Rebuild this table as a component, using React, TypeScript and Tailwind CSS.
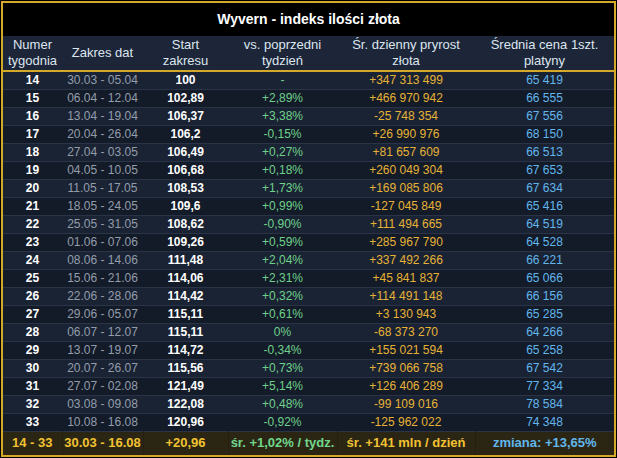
import React from "react"

type Row = [number, string, string, string, string, string]

const rows: Row[] = [
  [14, "30.03 - 05.04", "100", "-", "+347 313 499", "65 419"],
  [15, "06.04 - 12.04", "102,89", "+2,89%", "+466 970 942", "66 555"],
  [16, "13.04 - 19.04", "106,37", "+3,38%", "-25 748 354", "67 556"],
  [17, "20.04 - 26.04", "106,2", "-0,15%", "+26 990 976", "68 150"],
  [18, "27.04 - 03.05", "106,49", "+0,27%", "+81 657 609", "66 513"],
  [19, "04.05 - 10.05", "106,68", "+0,18%", "+260 049 304", "67 653"],
  [20, "11.05 - 17.05", "108,53", "+1,73%", "+169 085 806", "67 634"],
  [21, "18.05 - 24.05", "109,6", "+0,99%", "-127 045 849", "65 416"],
  [22, "25.05 - 31.05", "108,62", "-0,90%", "+111 494 665", "64 519"],
  [23, "01.06 - 07.06", "109,26", "+0,59%", "+285 967 790", "64 528"],
  [24, "08.06 - 14.06", "111,48", "+2,04%", "+337 492 266", "66 221"],
  [25, "15.06 - 21.06", "114,06", "+2,31%", "+45 841 837", "65 066"],
  [26, "22.06 - 28.06", "114,42", "+0,32%", "+114 491 148", "66 156"],
  [27, "29.06 - 05.07", "115,11", "+0,61%", "+3 130 943", "65 285"],
  [28, "06.07 - 12.07", "115,11", "0%", "-68 373 270", "64 266"],
  [29, "13.07 - 19.07", "114,72", "-0,34%", "+155 021 594", "65 258"],
  [30, "20.07 - 26.07", "115,56", "+0,73%", "+739 066 758", "67 542"],
  [31, "27.07 - 02.08", "121,49", "+5,14%", "+126 406 289", "77 334"],
  [32, "03.08 - 09.08", "122,08", "+0,48%", "-99 109 016", "78 584"],
  [33, "10.08 - 16.08", "120,96", "-0,92%", "-125 962 022", "74 348"],
]

export default function App() {
  return (
    <div className="w-[617px] h-[458px] bg-black p-px font-['Liberation_Sans',Arial,sans-serif]">
      <div className="w-[615px] h-[456px] border-2 border-[#d4a92a] overflow-hidden">
        <div className="h-[33px] bg-black flex items-center justify-center text-white font-bold text-[14px]">
          Wyvern - indeks ilości złota
        </div>
        <table className="w-full border-collapse table-fixed text-center">
          <colgroup>
            <col className="w-[59px]" />
            <col className="w-[81px]" />
            <col className="w-[85px]" />
            <col className="w-[109px]" />
            <col className="w-[138px]" />
            <col className="w-[139px]" />
          </colgroup>
          <thead>
            <tr className="bg-[#1c2638] text-[#dde5ef] text-[13px] leading-[16px] border-b-2 border-[#d4a92a]">
              <th className="font-normal p-0 h-[35px]">Numer<br />tygodnia</th>
              <th className="font-normal p-0">Zakres dat</th>
              <th className="font-normal p-0">Start<br />zakresu</th>
              <th className="font-normal p-0">vs. poprzedni<br />tydzień</th>
              <th className="font-normal p-0">Śr. dzienny pryrost<br />złota</th>
              <th className="font-normal p-0">Średnia cena 1szt.<br />platyny</th>
            </tr>
          </thead>
          <tbody className="text-[12px] leading-[14px]">
            {rows.map((r, i) => (
              <tr
                key={r[0]}
                className={`border-b border-[#2a3446] ${i % 2 === 0 ? "bg-[#1a2334]" : "bg-[#131b29]"}`}
              >
                <td className="text-white font-bold p-0 h-[18px]">{r[0]}</td>
                <td className="text-[#939daa] p-0">{r[1]}</td>
                <td className="text-white font-bold p-0">{r[2]}</td>
                <td className="text-[#6fd08a] p-0">{r[3]}</td>
                <td className="text-[#e6b236] p-0">{r[4]}</td>
                <td className="text-[#62b6ec] p-0">{r[5]}</td>
              </tr>
            ))}
            <tr className="bg-[#2b2614] text-[13px] font-bold">
              <td className="text-[#f2c232] p-0 h-[24px] border-r border-[#241f10]">14 - 33</td>
              <td className="text-[#f2c232] p-0 border-r border-[#241f10]">30.03 - 16.08</td>
              <td className="text-[#f2c232] p-0 border-r border-[#241f10]">+20,96</td>
              <td className="text-[#72d68c] p-0 border-r border-[#241f10]">śr. +1,02% / tydz.</td>
              <td className="text-[#f2c232] p-0 border-r border-[#241f10]">śr. +141 mln / dzień</td>
              <td className="text-[#62b6ec] p-0">zmiana: +13,65%</td>
            </tr>
          </tbody>
        </table>
      </div>
    </div>
  )
}
